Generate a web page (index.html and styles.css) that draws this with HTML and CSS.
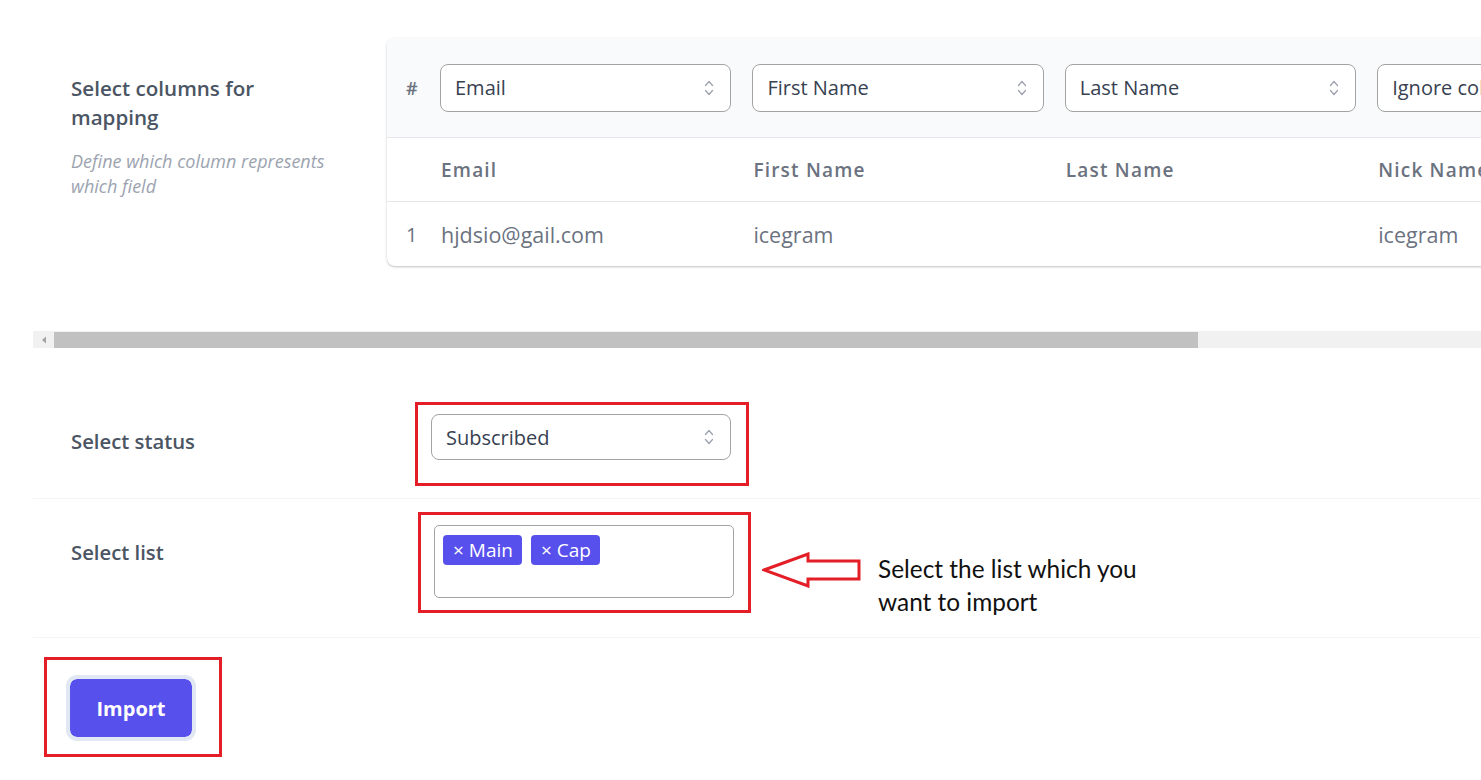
FILE: index.html
```html
<!DOCTYPE html>
<html lang="en">
<head>
<meta charset="utf-8">
<title>Import contacts</title>
<link rel="stylesheet" href="styles.css">
</head>
<body>
<div class="page">
  <section class="mapping-scroll">
    <div class="mapping">
      <div class="mapping-label">
        <h3 class="field-title">Select columns for mapping</h3>
        <p class="field-help">Define which column represents which field</p>
      </div>
      <div class="card">
        <div class="grid head-row">
          <div class="cell num">#</div>
          <div class="cell"><div class="select"><span>Email</span><svg class="chev" viewBox="0 0 10 18"><path d="M1.5 6.5 5 2.5 8.5 6.5M1.5 11.5 5 15.5 8.5 11.5"/></svg></div></div>
          <div class="cell"><div class="select"><span>First Name</span><svg class="chev" viewBox="0 0 10 18"><path d="M1.5 6.5 5 2.5 8.5 6.5M1.5 11.5 5 15.5 8.5 11.5"/></svg></div></div>
          <div class="cell"><div class="select"><span>Last Name</span><svg class="chev" viewBox="0 0 10 18"><path d="M1.5 6.5 5 2.5 8.5 6.5M1.5 11.5 5 15.5 8.5 11.5"/></svg></div></div>
          <div class="cell"><div class="select"><span>Ignore column</span><svg class="chev" viewBox="0 0 10 18"><path d="M1.5 6.5 5 2.5 8.5 6.5M1.5 11.5 5 15.5 8.5 11.5"/></svg></div></div>
        </div>
        <div class="grid col-row">
          <div class="cell num"></div>
          <div class="cell col-name">Email</div>
          <div class="cell col-name">First Name</div>
          <div class="cell col-name">Last Name</div>
          <div class="cell col-name">Nick Name</div>
        </div>
        <div class="grid data-row">
          <div class="cell num">1</div>
          <div class="cell">hjdsio@gail.com</div>
          <div class="cell">icegram</div>
          <div class="cell"></div>
          <div class="cell">icegram</div>
        </div>
      </div>
    </div>
  </section>

  <div class="scrollbar">
    <div class="sb-arrow"><svg viewBox="0 0 6 8"><path d="M5 0.5 1 4 5 7.5Z"/></svg></div>
    <div class="sb-thumb"></div>
    <div class="sb-track"></div>
  </div>

  <div class="row status-row">
    <div class="row-label status-label">Select status</div>
    <div class="mark mark-status">
      <div class="select status-select"><span>Subscribed</span><svg class="chev" viewBox="0 0 10 18"><path d="M1.5 6.5 5 2.5 8.5 6.5M1.5 11.5 5 15.5 8.5 11.5"/></svg></div>
    </div>
  </div>

  <div class="row list-row">
    <div class="row-label list-label">Select list</div>
    <div class="mark mark-list">
      <div class="multi">
        <span class="tag">× Main</span>
        <span class="tag">× Cap</span>
      </div>
    </div>
    <svg class="arrow" viewBox="0 0 100 36"><polygon points="2,18 46,2 46,9 97,9 97,27 46,27 46,34"/></svg>
    <p class="note">Select the list which you<br>want to import</p>
  </div>

  <div class="actions">
    <div class="mark mark-button">
      <button class="btn-import" type="button">Import</button>
    </div>
  </div>
</div>
</body>
</html>
```

FILE: styles.css
```css
* { box-sizing: border-box; }

body {
  margin: 0;
  background: #fff;
  font-family: "Open Sans", "Noto Sans", sans-serif;
  color: #374151;
}

.page {
  padding-left: 33px;
  overflow: hidden;
}

/* column mapping area, wider than the viewport */
.mapping-scroll {
  overflow: hidden;
}

.mapping {
  display: flex;
  padding-top: 38px;
  padding-bottom: 65px;
  width: 2000px;
}

.mapping-label {
  width: 354px;
  flex: none;
  padding-left: 38px;
  padding-top: 36px;
}

.field-title {
  margin: 0;
  width: 220px;
  font-size: 20.6px;
  line-height: 29px;
  font-weight: 600;
  color: #4b5563;
}

.field-help {
  margin: 17px 0 0;
  width: 290px;
  font-size: 18px;
  line-height: 25px;
  font-style: italic;
  color: #9ca3af;
}

.card {
  width: 1620px;
  flex: none;
  border-radius: 8px;
  background: #fff;
  box-shadow: 0 1px 3px rgba(0, 0, 0, 0.18), 0 1px 1px rgba(0, 0, 0, 0.08);
  overflow: hidden;
}

.grid {
  display: grid;
  grid-template-columns: 53px repeat(4, 312.4px);
  align-items: center;
}

.cell {
  padding-right: 21px;
  font-size: 20px;
  color: #6b7280;
  white-space: nowrap;
}

.cell.num {
  padding-left: 19px;
  padding-right: 0;
}

.head-row {
  background: #f9fafb;
  height: 100px;
  border-bottom: 1px solid #e5e7eb;
}

.head-row .num {
  font-size: 18px;
  font-weight: 600;
  color: #6b7280;
}

.col-row {
  height: 64px;
  border-bottom: 1px solid #e5e7eb;
}

.col-name {
  padding-left: 1px;
  font-size: 19px;
  font-weight: 600;
  letter-spacing: 1.2px;
  color: #6b7280;
}

.data-row {
  height: 64px;
}

.data-row .cell:not(.num) {
  padding-left: 1px;
  font-size: 21.5px;
}

/* select look-alike */
.select {
  display: flex;
  align-items: center;
  justify-content: space-between;
  height: 48px;
  padding: 0 14px 0 14px;
  border: 1px solid #a3a3a3;
  border-radius: 8px;
  background: #fff;
  font-size: 20px;
  color: #374151;
  overflow: hidden;
}

.chev {
  width: 10px;
  height: 18px;
  flex: none;
  margin-right: 2px;
  fill: none;
  stroke: #9ca3af;
  stroke-width: 1.3;
  stroke-linecap: round;
  stroke-linejoin: round;
}

/* horizontal scrollbar of the mapping area */
.scrollbar {
  display: flex;
  height: 17px;
  background: #f1f1f1;
}

.sb-arrow {
  width: 21px;
  display: flex;
  align-items: center;
  justify-content: center;
}

.sb-arrow svg {
  width: 6px;
  height: 8px;
  fill: #a3a3a3;
}

.sb-thumb {
  width: 1144px;
  height: 16px;
  margin-top: 1px;
  background: #c1c1c1;
}

.sb-track {
  flex: 1;
}

/* form rows */
.row {
  display: flex;
  align-items: flex-start;
  border-bottom: 1px solid #f3f4f6;
}

.row-label {
  width: 365px;
  flex: none;
  padding-left: 38px;
  font-size: 20.3px;
  line-height: 28px;
  font-weight: 600;
  color: #4b5563;
}

.status-row {
  padding-top: 54px;
  padding-bottom: 12px;
}

.status-label {
  padding-top: 25px;
}

.list-row {
  padding-top: 13px;
  padding-bottom: 24px;
}

.list-label {
  padding-top: 26px;
}

.mark {
  border: 3px solid #e31e26;
  flex: none;
}

.mark-status {
  margin-left: 17px;
  padding: 9px 15px 23px 13px;
}

.status-select {
  width: 300px;
  height: 46px;
}

.mark-list {
  margin-left: 20px;
  padding: 10px 14px 12px 13px;
}

.multi {
  width: 300px;
  height: 73px;
  border: 1px solid #a3a3a3;
  border-radius: 5px;
  padding: 9px 8px;
  display: flex;
  align-items: flex-start;
  gap: 9px;
}

.tag {
  display: inline-flex;
  align-items: center;
  height: 30px;
  padding: 0 9px 0 10px;
  border-radius: 4px;
  background: #5850ec;
  color: #fff;
  font-size: 19px;
}

.arrow {
  width: 100px;
  height: 36px;
  margin: 40px 0 0 11px;
  flex: none;
  fill: #fff;
  stroke: #e31e26;
  stroke-width: 3;
  stroke-linejoin: miter;
}

.note {
  margin: 40px 0 -10px 16px;
  font-family: "Lato", "Open Sans", sans-serif;
  font-size: 24.4px;
  line-height: 33px;
  color: #111;
}

.actions {
  padding: 19px 0 20px 11px;
}

.mark-button {
  display: inline-block;
  padding: 15px 23px 13px 19px;
}

.btn-import {
  display: block;
  width: 130px;
  height: 66px;
  border: 4px solid #e2e8f3;
  border-radius: 11px;
  background: #5850ec;
  background-clip: padding-box;
  color: #fff;
  font-family: "Open Sans", sans-serif;
  font-size: 20px;
  font-weight: 700;
  cursor: pointer;
}
```
